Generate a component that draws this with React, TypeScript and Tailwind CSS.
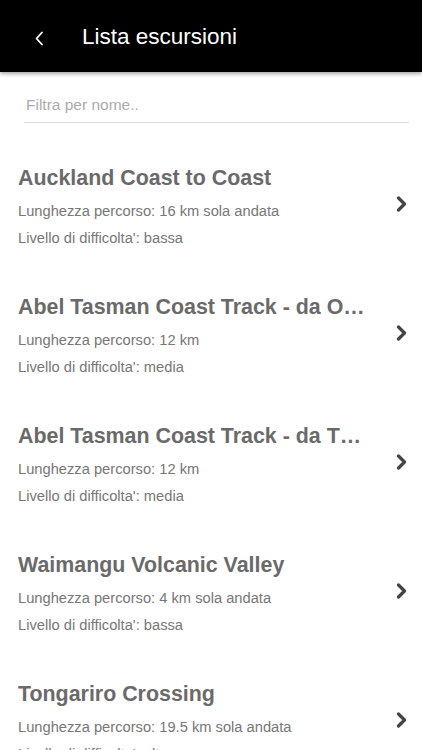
import React from "react";

const items = [
  { t: "Auckland Coast to Coast", l: "16 km sola andata", d: "bassa" },
  { t: "Abel Tasman Coast Track - da Onetahuti a Totaranui", l: "12 km", d: "media" },
  { t: "Abel Tasman Coast Track - da Three Mile Bay a Onetahuti", l: "12 km", d: "media" },
  { t: "Waimangu Volcanic Valley", l: "4 km sola andata", d: "bassa" },
  { t: "Tongariro Crossing", l: "19.5 km sola andata", d: "alta" },
];

function Chevron() {
  return (
    <svg width="12" height="16" viewBox="0 0 12 16" fill="none">
      <polyline points="2.5,2 8.5,8 2.5,14" stroke="#444" strokeWidth="3.2" strokeLinecap="round" strokeLinejoin="round" />
    </svg>
  );
}

export default function App() {
  return (
    <div className="w-[422px] h-[750px] overflow-hidden bg-white" style={{ fontFamily: '"Liberation Sans", Arial, sans-serif' }}>
      <div className="relative z-10 h-[72px] bg-black flex items-center shadow-[0_2px_4px_rgba(0,0,0,0.35)]">
        <div className="w-[82px] flex items-center pl-[34px] pt-[5px]">
          <svg width="10" height="15" viewBox="0 0 10 15" fill="none">
            <polyline points="8,1.5 2.5,7.5 8,13.5" stroke="#fff" strokeWidth="1.8" strokeLinecap="round" strokeLinejoin="round" />
          </svg>
        </div>
        <span className="text-white text-[22.5px] leading-none pt-[3px]">Lista escursioni</span>
      </div>
      <div className="px-[24px] pt-[23px] pr-[13px]">
        <div className="h-[28px] border-b border-[#dcdcdc] pl-[2px] text-[15.5px] leading-[20px] text-[#ababab]">
          Filtra per nome..
        </div>
      </div>
      <div className="mt-[22px]">
        {items.map((it, i) => (
          <div key={i} className="flex items-center pl-[18px] pr-[14px] pt-[21px] pb-[22px]">
            <div className="flex-1 min-w-0 pr-[22px]">
              <div className="text-[21.4px] leading-[24px] font-bold text-[#6a6a6a] truncate">{it.t}</div>
              <div className="mt-[8px] text-[14.7px] leading-[27px] text-[#777]">
                <div>Lunghezza percorso: {it.l}</div>
                <div>Livello di difficolta': {it.d}</div>
              </div>
            </div>
            <div className="mb-[11px]">
              <Chevron />
            </div>
          </div>
        ))}
      </div>
    </div>
  );
}
